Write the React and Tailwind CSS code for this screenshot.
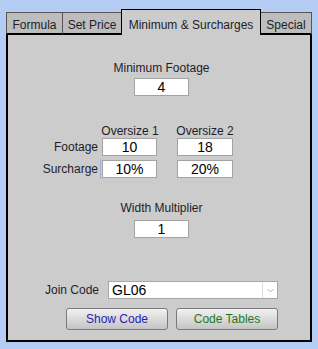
import React from "react";

function Field({ value, w = "w-[55px]" }) {
  return (
    <div className={`${w} h-[18px] bg-white border border-[#a3a3a3] flex items-center justify-center text-[14px] leading-none text-black`}>
      {value}
    </div>
  );
}

export default function App() {
  return (
    <div className="w-[318px] h-[349px] bg-[#b5cdf5] pt-[9px] pl-[6px] font-['Liberation_Sans',Arial,sans-serif] text-[12px] text-[#1e1e28] overflow-hidden">
      {/* Tabs */}
      <div className="flex items-end w-[306px] h-[26px]">
        <div className="w-[56px] h-[23px] bg-[#bdbdbd] border-t border-l border-[#555] border-b-2 border-b-black flex items-end justify-center pb-[1px] leading-[14px] whitespace-nowrap">
          Formula
        </div>
        <div className="w-[59px] h-[23px] bg-[#bdbdbd] border-t border-l border-[#555] border-b-2 border-b-black flex items-end justify-center pb-[1px] leading-[14px] whitespace-nowrap">
          Set Price
        </div>
        <div className="w-[140px] h-[26px] bg-[#cccccc] border-t border-l border-r border-black flex items-end justify-center pb-[3px] leading-[14px] whitespace-nowrap">
          Minimum &amp; Surcharges
        </div>
        <div className="flex-1 h-[23px] bg-[#bdbdbd] border-t border-r border-[#555] border-b-2 border-b-black flex items-end justify-center pb-[1px] leading-[14px] whitespace-nowrap">
          Special
        </div>
      </div>

      {/* Panel */}
      <div className="w-[306px] h-[307px] bg-[#cccccc] border-2 border-t-0 border-black flex flex-col">
        {/* Minimum Footage */}
        <div className="mt-[26px] flex flex-col items-center pl-[5px]">
          <div className="leading-[14px] h-[14px] whitespace-nowrap">Minimum Footage</div>
          <div className="mt-[3px]">
            <Field value="4" />
          </div>
        </div>

        {/* Oversize grid */}
        <div className="mt-[28px] flex flex-col">
          <div className="flex h-[14px] leading-[14px]">
            <div className="w-[92px]" />
            <div className="w-[60px] text-center whitespace-nowrap">Oversize 1</div>
            <div className="w-[15px]" />
            <div className="w-[60px] text-center whitespace-nowrap">Oversize 2</div>
          </div>
          <div className="flex items-center h-[18px]">
            <div className="w-[93px] text-right pr-[3px] leading-[14px] whitespace-nowrap">Footage</div>
            <div className="w-[1px]" />
            <Field value="10" />
            <div className="w-[20px]" />
            <Field value="18" w="w-[56px]" />
          </div>
          <div className="flex items-center h-[18px] mt-[4px]">
            <div className="w-[93px] h-[20px] flex items-center justify-end pr-[2px] border-r border-[#9fb3dc] leading-[14px] whitespace-nowrap">
              Surcharge
            </div>
            <div className="w-[1px]" />
            <Field value="10%" />
            <div className="w-[20px]" />
            <Field value="20%" w="w-[56px]" />
          </div>
        </div>

        {/* Width Multiplier */}
        <div className="mt-[23px] flex flex-col items-center pl-[5px]">
          <div className="leading-[14px] h-[14px] whitespace-nowrap">Width Multiplier</div>
          <div className="mt-[5px]">
            <Field value="1" />
          </div>
        </div>

        {/* Join Code */}
        <div className="mt-[43px] flex items-center h-[18px] pl-[37px]">
          <div className="w-[55px] leading-[14px] whitespace-nowrap">Join Code</div>
          <div className="ml-[8px] w-[170px] h-[18px] bg-white border border-[#a8a8a8] flex">
            <div className="flex-1 flex items-center pl-[3px] text-[14px] leading-none text-black">GL06</div>
            <div className="w-[15px] border-l border-[#dcdcdc] flex items-center justify-center">
              <svg width="7" height="5" viewBox="0 0 7 5">
                <path d="M0.5 1 L3.5 4 L6.5 1" fill="none" stroke="#b0b0b0" strokeWidth="1" />
              </svg>
            </div>
          </div>
        </div>

        {/* Buttons */}
        <div className="mt-[9px] flex gap-[8px] pl-[58px]">
          <div className="w-[102px] h-[22px] rounded-[3px] border border-[#7a7a7a] bg-gradient-to-b from-[#f2f2f2] to-[#c4c4c4] flex items-center justify-center text-[#2424b0] leading-[14px] whitespace-nowrap">
            Show Code
          </div>
          <div className="w-[102px] h-[22px] rounded-[3px] border border-[#7a7a7a] bg-gradient-to-b from-[#f2f2f2] to-[#c4c4c4] flex items-center justify-center text-[#1c7a1c] leading-[14px] whitespace-nowrap">
            Code Tables
          </div>
        </div>
      </div>
    </div>
  );
}
